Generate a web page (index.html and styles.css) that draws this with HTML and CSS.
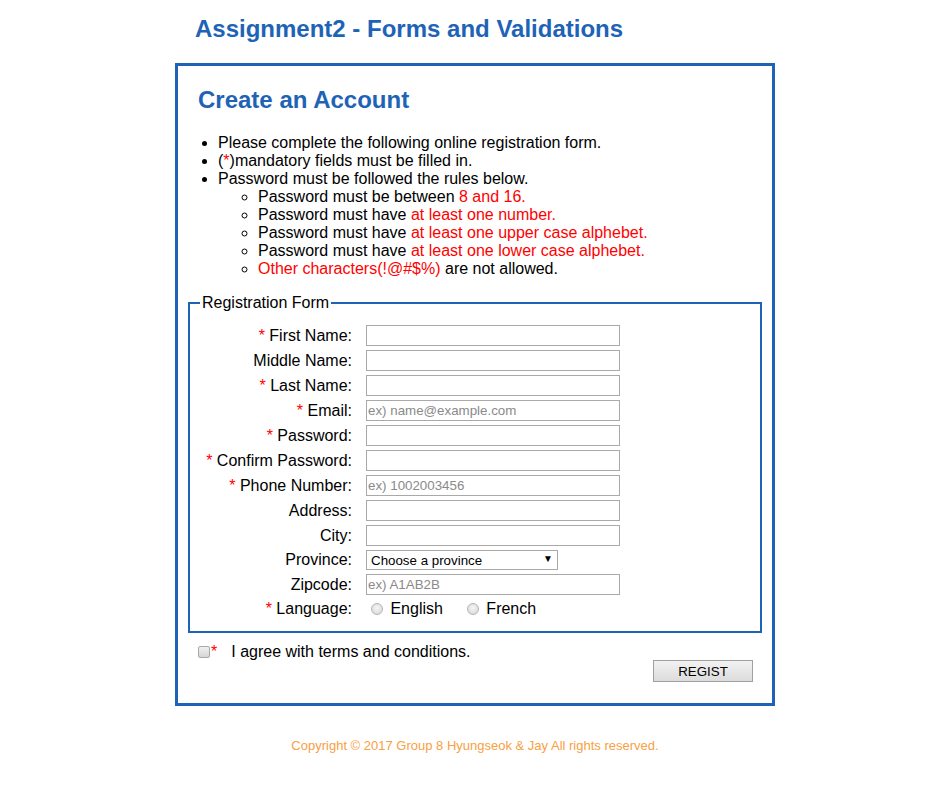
FILE: index.html
```html
<!DOCTYPE html>
<html lang="en">
<head>
<meta charset="utf-8">
<title>Assignment2 - Forms and Validations</title>
<link rel="stylesheet" href="styles.css">
</head>
<body>
<div class="page">
  <h1 class="title">Assignment2 - Forms and Validations</h1>
  <div class="card">
    <h2 class="card-title">Create an Account</h2>
    <ul class="rules">
      <li>Please complete the following online registration form.</li>
      <li>(<span class="red">*</span>)mandatory fields must be filled in.</li>
      <li>Password must be followed the rules below.
        <ul class="sub">
          <li>Password must be between <span class="red">8 and 16.</span></li>
          <li>Password must have <span class="red">at least one number.</span></li>
          <li>Password must have <span class="red">at least one upper case alphebet.</span></li>
          <li>Password must have <span class="red">at least one lower case alphebet.</span></li>
          <li><span class="red">Other characters(!@#$%)</span> are not allowed.</li>
        </ul>
      </li>
    </ul>
    <form class="form">
      <fieldset class="fs">
        <legend class="legend">Registration Form</legend>
        <div class="grid">
          <label class="lbl"><span class="red">*</span>&nbsp;First Name:</label>
          <input class="inp" type="text">
          <label class="lbl">Middle Name:</label>
          <input class="inp" type="text">
          <label class="lbl"><span class="red">*</span>&nbsp;Last Name:</label>
          <input class="inp" type="text">
          <label class="lbl"><span class="red">*</span>&nbsp;Email:</label>
          <input class="inp" type="text" placeholder="ex) name@example.com">
          <label class="lbl"><span class="red">*</span>&nbsp;Password:</label>
          <input class="inp" type="password">
          <label class="lbl"><span class="red">*</span>&nbsp;Confirm Password:</label>
          <input class="inp" type="password">
          <label class="lbl"><span class="red">*</span>&nbsp;Phone Number:</label>
          <input class="inp" type="text" placeholder="ex) 1002003456">
          <label class="lbl">Address:</label>
          <input class="inp" type="text">
          <label class="lbl">City:</label>
          <input class="inp" type="text">
          <label class="lbl">Province:</label>
          <div class="sel-wrap">
            <select class="sel">
              <option>Choose a province</option>
              <option>Ontario</option>
              <option>Quebec</option>
            </select>
            <span class="sel-arrow">&#9660;</span>
          </div>
          <label class="lbl">Zipcode:</label>
          <input class="inp" type="text" placeholder="ex) A1AB2B">
          <label class="lbl"><span class="red">*</span>&nbsp;Language:</label>
          <div class="radios">
            <label class="radio-l first"><input class="radio" type="radio" name="lang"> English</label>
            <label class="radio-l"><input class="radio" type="radio" name="lang"> French</label>
          </div>
        </div>
      </fieldset>
      <div class="agree">
        <input class="chk" type="checkbox"><span class="red">*</span><span class="agree-text">I agree with terms and conditions.</span>
      </div>
      <div class="actions">
        <button class="btn" type="button">REGIST</button>
      </div>
    </form>
  </div>
  <footer class="footer">Copyright &copy; 2017 Group 8 Hyungseok &amp; Jay All rights reserved.</footer>
</div>
</body>
</html>
```
FILE: styles.css
```css
html, body {
  margin: 0;
  padding: 0;
  background: #ffffff;
}
body {
  font-family: "Liberation Sans", Arial, sans-serif;
  font-size: 16px;
  color: #000;
  padding-right: 1px;
}
.page {
  width: 600px;
  margin: 0 auto;
  padding-top: 15px;
}
.title {
  margin: 0 0 20px 20px;
  font-size: 24px;
  line-height: 28px;
  font-weight: bold;
  color: #1e63b6;
}
.card {
  box-sizing: border-box;
  width: 600px;
  border: 3px solid #1e63b6;
  padding: 0 10px 21px;
}
.card-title {
  margin: 20px 10px 20px;
  font-size: 24px;
  font-weight: bold;
  color: #1e63b6;
}
.rules {
  margin: 0 10px;
  padding-left: 20px;
  list-style: disc;
}
.sub {
  margin: 0;
  padding-left: 40px;
  list-style: circle;
}
.red {
  color: #ff0000;
}
.form {
  margin: 0;
}
.fs {
  margin: 16px 0 0;
  border: 2px solid #1e63b6;
  padding: 0 10px 12px;
  min-width: 0;
}
.legend {
  padding: 0 2px;
  font-size: 16px;
}
.grid {
  margin-top: 13px;
  display: grid;
  grid-template-columns: 152px 254px;
  column-gap: 14px;
  row-gap: 4px;
  align-items: center;
}
.lbl {
  text-align: right;
  white-space: nowrap;
  line-height: 18px;
}
.inp {
  box-sizing: border-box;
  width: 254px;
  height: 21px;
  margin: 0;
  border: 1px solid #a9a9a9;
  border-radius: 0;
  padding: 1px 1px;
  font-family: "Liberation Sans", Arial, sans-serif;
  font-size: 13.333px;
  color: #000;
  background: #fff;
  outline: none;
}
.inp::placeholder {
  color: #8a8a8a;
}
.sel-wrap {
  position: relative;
  width: 192px;
  height: 20px;
}
.sel {
  -webkit-appearance: none;
  appearance: none;
  box-sizing: border-box;
  width: 192px;
  height: 20px;
  margin: 0;
  border: 1px solid #a9a9a9;
  border-radius: 0;
  padding: 0 0 0 4px;
  background: #fff;
  font-family: "Liberation Sans", Arial, sans-serif;
  font-size: 13.333px;
  color: #000;
  outline: none;
}
.sel-arrow {
  position: absolute;
  right: 5px;
  top: 4px;
  font-size: 10px;
  line-height: 10px;
  color: #000;
  pointer-events: none;
}
.radios {
  height: 20px;
  display: flex;
  align-items: center;
}
.radio-l {
  display: inline-flex;
  align-items: center;
  white-space: pre;
}
.radio-l.first {
  margin-right: 19px;
}
.radio {
  -webkit-appearance: none;
  appearance: none;
  box-sizing: border-box;
  width: 12px;
  height: 12px;
  margin: 0 3px 0 5px;
  border: 1px solid #b5b5b5;
  border-radius: 50%;
  background: radial-gradient(circle at 50% 40%, #f6f6f6 0%, #dedede 70%, #d0d0d0 100%);
}
.agree {
  display: flex;
  align-items: center;
  margin: 9px 0 0 10px;
  height: 19px;
}
.chk {
  -webkit-appearance: none;
  appearance: none;
  box-sizing: border-box;
  width: 12px;
  height: 12px;
  margin: 0 1px 0 0;
  border: 1px solid #a9a9a9;
  border-radius: 2px;
  background: linear-gradient(#f0f0f0, #d6d6d6);
}
.agree-text {
  margin-left: 14px;
}
.actions {
  display: flex;
  justify-content: flex-end;
  padding-right: 9px;
  margin-top: -1px;
}
.btn {
  box-sizing: border-box;
  width: 100px;
  height: 22px;
  margin: 0;
  border: 1px solid #a0a0a0;
  border-radius: 0;
  background: linear-gradient(#f2f2f2, #dcdcdc);
  font-family: "Liberation Sans", Arial, sans-serif;
  font-size: 13.333px;
  color: #000;
  padding: 0;
}
.footer {
  margin-top: 32px;
  text-align: center;
  font-size: 13px;
  color: #f9a03f;
}
```
